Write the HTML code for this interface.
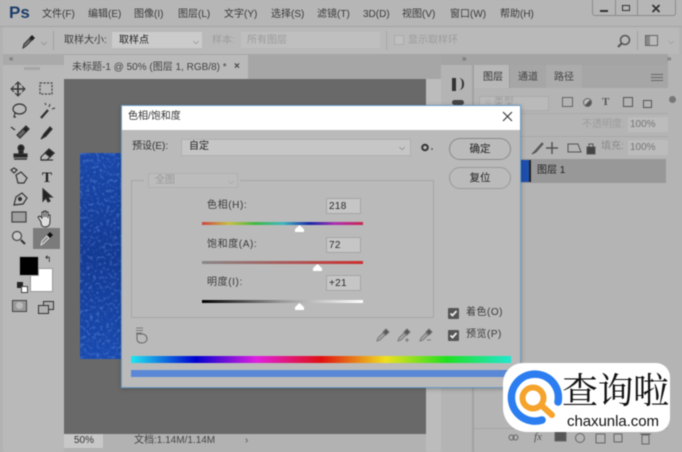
<!DOCTYPE html>
<html><head><meta charset="utf-8">
<style>
html,body{margin:0;padding:0}
body{width:682px;height:452px;overflow:hidden;position:relative;background:#b2b2b2}
#w{position:absolute;left:0;top:0;width:682px;height:452px;overflow:hidden;background:#b2b2b2;filter:blur(.45px);font-family:"Liberation Sans","Noto Sans CJK SC",sans-serif;color:#3a3a3a;font-size:10px}
.a{position:absolute}
.t{position:absolute;white-space:nowrap;line-height:18px}
svg{position:absolute;overflow:visible}
.g{color:#9c9c9c}
.inp{position:absolute;background:#c6c6c6;border:1px solid #a6a6a6;box-sizing:border-box;font-size:10px;line-height:16px;padding-left:2px;color:#2a2a2a;letter-spacing:.3px}
.btn{position:absolute;left:449px;width:62px;height:22px;border:1px solid #8a8a8a;border-radius:11px;box-sizing:border-box;text-align:center;line-height:21px;color:#222;font-size:10.5px;background:#bbb}
.chk{position:absolute;left:448px;width:11px;height:11px;background:#555;border-radius:1px}
</style></head><body><div id="w">
<!-- top bars -->
<div class="a" style="left:0;top:0;width:682px;height:27px;background:#b6b6b6"></div>
<div class="a" style="left:0;top:26px;width:682px;height:1px;background:#a4a4a4"></div>
<div class="a" style="left:3px;top:27px;width:676px;height:27px;background:#b9b9b9"></div>
<div class="t" style="left:9px;top:3px;font-size:17px;font-weight:bold;color:#1d3d6a;line-height:20px">Ps</div>
<div class="t" style="left:42px;top:6px">文件(F)</div>
<div class="t" style="left:88px;top:6px">编辑(E)</div>
<div class="t" style="left:134px;top:6px">图像(I)</div>
<div class="t" style="left:178px;top:6px">图层(L)</div>
<div class="t" style="left:224px;top:6px">文字(Y)</div>
<div class="t" style="left:271px;top:6px">选择(S)</div>
<div class="t" style="left:317px;top:6px">滤镜(T)</div>
<div class="t" style="left:363px;top:6px">3D(D)</div>
<div class="t" style="left:402px;top:6px">视图(V)</div>
<div class="t" style="left:450px;top:6px">窗口(W)</div>
<div class="t" style="left:500px;top:6px">帮助(H)</div>
<!-- window buttons -->
<div class="a" style="left:592px;top:0;width:84px;height:16px;border:1px solid #8c8c8c;border-top:0;box-sizing:border-box;border-radius:0 0 3px 3px"></div>
<div class="a" style="left:615px;top:0;width:1px;height:16px;background:#8c8c8c"></div>
<div class="a" style="left:637px;top:0;width:1px;height:16px;background:#8c8c8c"></div>
<div class="a" style="left:600px;top:10px;width:8px;height:2px;background:#333"></div>
<div class="a" style="left:622px;top:5px;width:8px;height:6px;border:1.5px solid #333;box-sizing:border-box"></div>
<svg style="left:651px;top:4px" width="10" height="9" viewBox="0 0 10 9"><path d="M1.500 1l7 7M8.500 1l-7 7" stroke="#333" stroke-width="1.800"/></svg>
<!-- options bar -->
<svg style="left:20px;top:34px" width="16" height="16" viewBox="0 0 16 16"><path d="M3 14l1-4 5-5 2 2-5 5z" fill="#777" stroke="#333"/><path d="M9 4l3-3 3 3-3 3z" fill="#222"/></svg>
<div class="t" style="left:41px;top:34px;font-size:8px;color:#666">⌵</div>
<div class="a" style="left:53px;top:31px;width:1px;height:19px;background:#a2a2a2"></div>
<div class="t" style="left:64px;top:32px">取样大小:</div>
<div class="a" style="left:112px;top:32px;width:90px;height:16px;background:#cbcbcb"></div>
<div class="t" style="left:119px;top:32px;color:#222">取样点</div>
<div class="t" style="left:193px;top:33px;font-size:8px;color:#666">⌵</div>
<div class="t g" style="left:212px;top:32px">样本:</div>
<div class="a" style="left:241px;top:32px;width:139px;height:16px;background:#bfbfbf"></div>
<div class="t g" style="left:247px;top:32px">所有图层</div>
<div class="a" style="left:386px;top:31px;width:1px;height:19px;background:#a8a8a8"></div>
<div class="a" style="left:394px;top:35px;width:10px;height:10px;background:#c0c0c0;border:1px solid #aaa;box-sizing:border-box"></div>
<div class="t g" style="left:408px;top:32px">显示取样环</div>
<svg style="left:616px;top:33px" width="16" height="16" viewBox="0 0 16 16"><circle cx="9" cy="7" r="4.500" fill="none" stroke="#555" stroke-width="1.500"/><path d="M6 10l-4 4" stroke="#555" stroke-width="2"/></svg>
<div class="a" style="left:637px;top:31px;width:1px;height:19px;background:#a2a2a2"></div>
<div class="a" style="left:645px;top:35px;width:13px;height:11px;border:1px solid #666;box-sizing:border-box;background:linear-gradient(90deg,#888 0 4px,#bbb 4px)"></div>
<div class="t" style="left:668px;top:33px;font-size:8px;color:#888">⌵</div>
<!-- left toolbar -->
<div class="a" style="left:3px;top:54px;width:61px;height:398px;background:#b9b9b9"></div>
<div class="a" style="left:3px;top:54px;width:61px;height:11px;background:#aaa"></div>
<div class="t" style="left:9px;top:50px;font-size:8px;color:#555">«</div>
<div class="a" style="left:24px;top:67px;width:16px;height:3px;background:#a6a6a6"></div>
<svg style="left:0;top:0" width="64" height="330" viewBox="0 0 64 330" fill="none" stroke="#333" stroke-width="1.200">
<path d="M18 83v12M12 89h12" stroke-width="1.600"/><path d="M15 85l3-3 3 3M15 93l3 3 3-3M14 86l-3 3 3 3M22 86l3 3-3 3" stroke-width="1"/>
<rect x="40" y="83" width="12" height="11" stroke-dasharray="2.200 1.300" stroke="#444"/>
<ellipse cx="19.500" cy="109" rx="6.500" ry="5"/><path d="M15 113l-1 4 2 0"/>
<path d="M41 118l7-8" stroke-width="2.400"/><path d="M49 107l1-3M52 109l3-1M46 105l-1-2" stroke-width="1"/>
<path d="M17 135l6-6 3 3-6 6z" fill="#666"/><path d="M23 129l3-3 3 3-3 3z" fill="#222"/><path d="M11 127l4 3"/>
<path d="M41 139l3-5 6-7 2 2-6 7z" fill="#222"/>
<path d="M19 149h4v5h-4z" fill="#222"/><circle cx="21" cy="148" r="3" fill="#222"/><path d="M14 154h13v3h-13z" fill="#222"/><path d="M14 159h13" stroke-width="1.500"/>
<path d="M41 157l8-8 5 4-7 7h-6z" fill="#bbb"/><path d="M45 153l4-4 5 4-4 4z" fill="#222"/><path d="M41 160h12"/>
<path d="M11 170l3-2 3 2-3 3zM16 175l5-3 6 6-3 5h-6z"/>
<text x="42" y="182" font-family="Liberation Serif" font-size="15" font-weight="bold" fill="#222" stroke="none">T</text>
<path d="M14 205l2-8 6-4 5 5-4 6z"/><circle cx="20" cy="199" r="1.500" fill="#333"/>
<path d="M43 189l0 12 3-3 2 4 2-1-2-4 4 0z" fill="#222"/>
<rect x="12" y="212" width="14" height="10" fill="#a0a0a0" stroke="#444"/>
<path d="M41 222l-3-5 2-1 2 2v-6h2v5-6h2v6-5h2v6-3h2v7c0 3-2 5-5 5s-4-2-4-5z" fill="#ddd" stroke="#333" stroke-width="1"/>
<circle cx="17" cy="236" r="4.500" fill="#c8c8c8" stroke="#444"/><path d="M21 240l4 4" stroke-width="2"/>
</svg>
<div class="a" style="left:33px;top:228px;width:27px;height:21px;background:#7b7b7b"></div>
<svg style="left:39px;top:231px" width="16" height="16" viewBox="0 0 16 16"><path d="M2 14l1-4 5-5 2 2-5 5z" fill="#888" stroke="#ddd"/><path d="M8 4l3-3 3 3-3 3z" fill="#111"/></svg>
<div class="a" style="left:30px;top:268px;width:21px;height:22px;background:#fff;border:1px solid #999"></div>
<div class="a" style="left:19px;top:256px;width:18px;height:18px;background:#000;border:1px solid #aaa"></div>
<div class="t" style="left:44px;top:250px;font-size:9px;color:#222">↰</div>
<div class="a" style="left:17px;top:282px;width:6px;height:6px;background:#222"></div>
<div class="a" style="left:21px;top:286px;width:5px;height:5px;background:#fff;border:1px solid #444"></div>
<div class="a" style="left:12px;top:300px;width:13px;height:10px;border:1px solid #444;background:#999"></div>
<div class="a" style="left:16px;top:302px;width:7px;height:7px;border-radius:50%;background:#bbb"></div>
<div class="a" style="left:43px;top:301px;width:9px;height:7px;background:#b0b0b0;border:1px solid #333"></div>
<div class="a" style="left:38px;top:305px;width:9px;height:7px;background:#b0b0b0;border:1px solid #333"></div>
<!-- tabs / canvas -->
<div class="a" style="left:64px;top:54px;width:377px;height:25px;background:#a6a6a6"></div>
<div class="a" style="left:64px;top:55px;width:184px;height:24px;background:#bababa"></div>
<div class="t" style="left:72px;top:59px;color:#444">未标题-1 @ 50% (图层 1, RGB/8) *</div>
<div class="t" style="left:234px;top:58px;font-weight:bold;color:#444">×</div>
<div class="a" style="left:64px;top:79px;width:362px;height:355px;background:#696969"></div>
<div class="a" style="left:426px;top:79px;width:15px;height:373px;background:#bcbcbc"></div>
<svg style="left:80px;top:153px" width="41" height="206" viewBox="0 0 41 206">
<defs><filter id="n" x="0" y="0" width="100%" height="100%"><feTurbulence type="fractalNoise" baseFrequency=".3" numOctaves="2" seed="5"/><feColorMatrix values="0 0 0 0 .3  0 0 0 0 .5  0 0 0 0 1  1 0 0 0 -.5"/></filter>
<linearGradient id="bg" x1="0" y1="0" x2="0" y2="1"><stop offset="0" stop-color="#1a48aa"/><stop offset=".5" stop-color="#133a94"/><stop offset="1" stop-color="#1a4bb0"/></linearGradient></defs>
<rect width="41" height="206" fill="url(#bg)"/><rect width="41" height="206" filter="url(#n)"/></svg>
<!-- status bar -->
<div class="a" style="left:64px;top:434px;width:362px;height:18px;background:#b2b2b2"></div>
<div class="a" style="left:64px;top:434px;width:39px;height:14px;background:#c8c8c8"></div>
<div class="t" style="left:74px;top:432px;color:#333">50%</div>
<div class="t" style="left:134px;top:432px;color:#444">文档:1.14M/1.14M</div>
<div class="t" style="left:245px;top:432px;color:#555">›</div>
<!-- right panels -->
<div class="a" style="left:441px;top:54px;width:241px;height:398px;background:#b4b4b4"></div>
<div class="a" style="left:441px;top:54px;width:227px;height:11px;background:#a4a4a4"></div>
<div class="t" style="left:462px;top:50px;font-size:8px;color:#555">»</div>
<div class="t" style="left:667px;top:50px;font-size:8px;color:#555">»</div>
<div class="a" style="left:472px;top:65px;width:2px;height:387px;background:#a2a2a2"></div>
<div class="a" style="left:452px;top:78px;width:4px;height:13px;background:#333"></div>
<div class="a" style="left:459px;top:78px;width:5px;height:12px;border-right:2px solid #333;border-radius:0 5px 5px 0;box-sizing:border-box"></div>
<div class="a" style="left:452px;top:100px;width:12px;height:5px;background:#444;border-radius:3px"></div>
<div class="a" style="left:474px;top:65px;width:194px;height:23px;background:#a6a6a6"></div>
<div class="a" style="left:474px;top:65px;width:35px;height:23px;background:#b8b8b8"></div>
<div class="t" style="left:483px;top:69px;color:#333">图层</div>
<div class="a" style="left:509px;top:65px;width:1px;height:23px;background:#999"></div>
<div class="t" style="left:518px;top:69px;color:#444">通道</div>
<div class="a" style="left:546px;top:65px;width:36px;height:23px;background:#acacac"></div>
<div class="t" style="left:554px;top:69px;color:#444">路径</div>
<div class="a" style="left:651px;top:74px;width:12px;height:1px;background:#666;box-shadow:0 3px 0 #666,0 6px 0 #666"></div>
<div class="a" style="left:479px;top:96px;width:70px;height:15px;background:#bababa;border:1px solid #aaa;box-sizing:border-box"></div>
<div class="t g" style="left:485px;top:94px">○ 类型</div>
<div class="a" style="left:562px;top:97px;width:11px;height:10px;border:1px solid #666;box-sizing:border-box"></div>
<div class="a" style="left:583px;top:98px;width:9px;height:9px;border-radius:50%;border:1px solid #666;box-sizing:border-box;background:linear-gradient(135deg,#bbb 50%,#555 50%)"></div>
<div class="t" style="left:602px;top:93px;font-family:'Liberation Serif';font-weight:bold;font-size:11px;color:#555">T</div>
<div class="a" style="left:623px;top:97px;width:10px;height:10px;border:1px solid #555;box-sizing:border-box"></div>
<div class="a" style="left:643px;top:100px;width:9px;height:8px;border:1px solid #555;box-sizing:border-box"></div>
<div class="a" style="left:669px;top:96px;width:7px;height:7px;border-radius:50%;background:#777"></div>
<div class="a" style="left:474px;top:113px;width:194px;height:1px;background:#a8a8a8"></div>
<div class="t g" style="left:582px;top:116px">不透明度:</div>
<div class="a" style="left:628px;top:117px;width:40px;height:15px;background:#bcbcbc"></div>
<div class="t" style="left:630px;top:116px;color:#777">100%</div>
<div class="a" style="left:474px;top:136px;width:194px;height:1px;background:#a8a8a8"></div>
<svg style="left:528px;top:140px" width="92" height="16" viewBox="0 0 92 16" fill="none" stroke="#555"><path d="M4 14l3-3 7-8 1 1-7 8z" fill="#666"/><path d="M24 2v12M18 8h12" stroke-width="1.500"/><path d="M40 4h10l3 8h-13z"/><path d="M59 7h8v7h-8z" fill="#444"/><path d="M61 7v-3h4v3"/></svg>
<div class="t" style="left:601px;top:138px;color:#8c8c8c">填充:</div>
<div class="a" style="left:628px;top:140px;width:40px;height:15px;background:#bcbcbc"></div>
<div class="t" style="left:630px;top:139px;color:#777">100%</div>
<div class="a" style="left:520px;top:159px;width:146px;height:24px;background:#989898"></div>
<div class="a" style="left:520px;top:160px;width:9px;height:22px;background:#1e4fb0;border-right:2px solid #222"></div>
<div class="t" style="left:537px;top:162px;color:#222">图层 1</div>
<div class="a" style="left:474px;top:428px;width:194px;height:1px;background:#a4a4a4"></div>
<div class="t" style="left:534px;top:428px;font-family:'Liberation Serif';font-style:italic;color:#555;font-size:11px">fx</div>
<svg style="left:508px;top:431px" width="150" height="14" viewBox="0 0 150 14" fill="none" stroke="#666"><rect x="1" y="4" width="5" height="5" rx="2.500"/><rect x="5" y="4" width="5" height="5" rx="2.500"/><rect x="47" y="1" width="11" height="9" fill="#555"/><circle cx="72" cy="7" r="4.500"/><path d="M88 3h9v9h-9z"/><path d="M106 3h8v8h-8z"/><path d="M134 4h7v9h-7zM132 3h11"/></svg>
<!-- dialog -->
<div class="a" style="left:121px;top:105px;width:400px;height:283px;background:#bababa;border:1px solid #6f9fc8;box-sizing:border-box;box-shadow:0 1px 4px rgba(50,50,50,.4)"></div>
<div class="a" style="left:122px;top:106px;width:398px;height:24px;background:#fff"></div>
<div class="t" style="left:128px;top:108px;color:#333">色相/饱和度</div>
<svg style="left:502px;top:111px" width="11" height="11" viewBox="0 0 11 11"><path d="M1 1l9 9M10 1l-9 9" stroke="#333" stroke-width="1.100"/></svg>
<div class="t" style="left:132px;top:138px;color:#333">预设(E):</div>
<div class="a" style="left:181px;top:139px;width:230px;height:17px;background:#c6c6c6;border:1px solid #b0b0b0;box-sizing:border-box"></div>
<div class="t" style="left:189px;top:138px;color:#222">自定</div>
<div class="t" style="left:399px;top:139px;font-size:8px;color:#555">⌵</div>
<svg style="left:420px;top:142px" width="14" height="11" viewBox="0 0 14 11"><circle cx="5" cy="5.500" r="2.800" fill="none" stroke="#333" stroke-width="2"/><circle cx="12" cy="7" r=".8" fill="#333"/></svg>
<div class="btn" style="top:138px">确定</div>
<div class="btn" style="top:167px;border-color:#999">复位</div>
<!-- group box -->
<div class="a" style="left:131px;top:180px;width:303px;height:138px;border:1px solid #a6a6a6;box-sizing:border-box"></div>
<div class="a" style="left:144px;top:172px;width:96px;height:18px;background:#bababa"></div>
<div class="a" style="left:148px;top:173px;width:90px;height:15px;background:#bcbcbc;border:1px solid #afafaf;box-sizing:border-box"></div>
<div class="t g" style="left:155px;top:172px;color:#999">全图</div>
<div class="t" style="left:228px;top:173px;font-size:8px;color:#999">⌵</div>
<div class="t" style="left:207px;top:197px;letter-spacing:.6px">色相(H):</div>
<div class="inp" style="left:326px;top:198px;width:35px;height:16px">218</div>
<div class="a" style="left:202px;top:222px;width:161px;height:3px;background:linear-gradient(90deg,#c44 0,#c8c040 17%,#40b840 33%,#40b8c0 50%,#1828a8 67%,#b030b0 83%,#c82850 100%)"></div>
<div class="a" style="left:295px;top:225px;width:9px;height:7px;background:#fff;clip-path:polygon(50% 0,100% 60%,100% 100%,0 100%,0 60%)"></div>
<div class="t" style="left:207px;top:236px;letter-spacing:.6px">饱和度(A):</div>
<div class="inp" style="left:326px;top:237px;width:35px;height:16px">72</div>
<div class="a" style="left:202px;top:261px;width:161px;height:3px;background:linear-gradient(90deg,#888,#cc3030)"></div>
<div class="a" style="left:313px;top:264px;width:9px;height:7px;background:#fff;clip-path:polygon(50% 0,100% 60%,100% 100%,0 100%,0 60%)"></div>
<div class="t" style="left:207px;top:274px;letter-spacing:.6px">明度(I):</div>
<div class="inp" style="left:326px;top:275px;width:35px;height:16px">+21</div>
<div class="a" style="left:202px;top:300px;width:161px;height:3px;background:linear-gradient(90deg,#000,#999 50%,#fff)"></div>
<div class="a" style="left:295px;top:303px;width:9px;height:7px;background:#fff;clip-path:polygon(50% 0,100% 60%,100% 100%,0 100%,0 60%)"></div>
<svg style="left:134px;top:327px" width="16" height="17" viewBox="0 0 16 17" fill="none" stroke="#666"><path d="M2 1h7M2 3.500h7M2 6h6" stroke-width=".8"/><path d="M3 8v4c0 3 2 4 5 4s5-2 5-4c0-3-2-5-5-5H3z"/></svg>
<svg style="left:375px;top:327px" width="60" height="16" viewBox="0 0 60 16" fill="none" stroke="#777"><path d="M2 14l1-3 5-5 2 2-5 5z" fill="#aaa"/><path d="M8 5l3-3 3 3-3 3z" fill="#555"/><path d="M23 14l1-3 5-5 2 2-5 5z" fill="#aaa"/><path d="M29 5l3-3 3 3-3 3z" fill="#555"/><path d="M30 13h4M32 11v4"/><path d="M45 14l1-3 5-5 2 2-5 5z" fill="#aaa"/><path d="M51 5l3-3 3 3-3 3z" fill="#555"/><path d="M52 13h4"/></svg>
<div class="chk" style="top:308px"></div>
<svg style="left:448px;top:308px" width="11" height="11" viewBox="0 0 11 11"><path d="M2.500 5.500l2 2 4-4.500" fill="none" stroke="#eee" stroke-width="1.800"/></svg>
<div class="t" style="left:466px;top:304px;letter-spacing:.5px">着色(O)</div>
<div class="chk" style="top:330px"></div>
<svg style="left:448px;top:330px" width="11" height="11" viewBox="0 0 11 11"><path d="M2.500 5.500l2 2 4-4.500" fill="none" stroke="#eee" stroke-width="1.800"/></svg>
<div class="t" style="left:466px;top:326px;letter-spacing:.5px">预览(P)</div>
<div class="a" style="left:131px;top:356px;width:380px;height:7px;background:linear-gradient(90deg,#20e8f0 0,#0000d0 17%,#e020e0 33%,#e01010 50%,#f0e020 67%,#20e020 83%,#20e8d0 100%)"></div>
<div class="a" style="left:131px;top:370px;width:380px;height:7px;background:#5b88d6"></div>
<!-- watermark -->
<div class="a" style="left:503px;top:363px;width:167px;height:69px;background:#fff;border-radius:20px 14px 14px 24px"></div>
<svg style="left:0;top:0" width="682" height="452" viewBox="0 0 682 452">
<path d="M542 420A23.500 23.500 0 1 1 558 402" fill="none" stroke="#2b7df0" stroke-width="7.500" stroke-linecap="round"/>
<circle cx="533" cy="398" r="10.500" fill="none" stroke="#f5a32c" stroke-width="6"/>
<path d="M541 405l11 10" stroke="#f5a32c" stroke-width="6" stroke-linecap="round"/></svg>
<div class="t" style="left:562px;top:370px;font-size:36px;line-height:42px;color:#111;font-family:'Liberation Serif','Noto Serif CJK SC',serif;letter-spacing:-.5px">查询啦</div>
<div class="t" style="left:567px;top:413px;font-size:15px;line-height:18px;color:#111;letter-spacing:-.05px">chaxunla.com</div>
</div></body></html>
